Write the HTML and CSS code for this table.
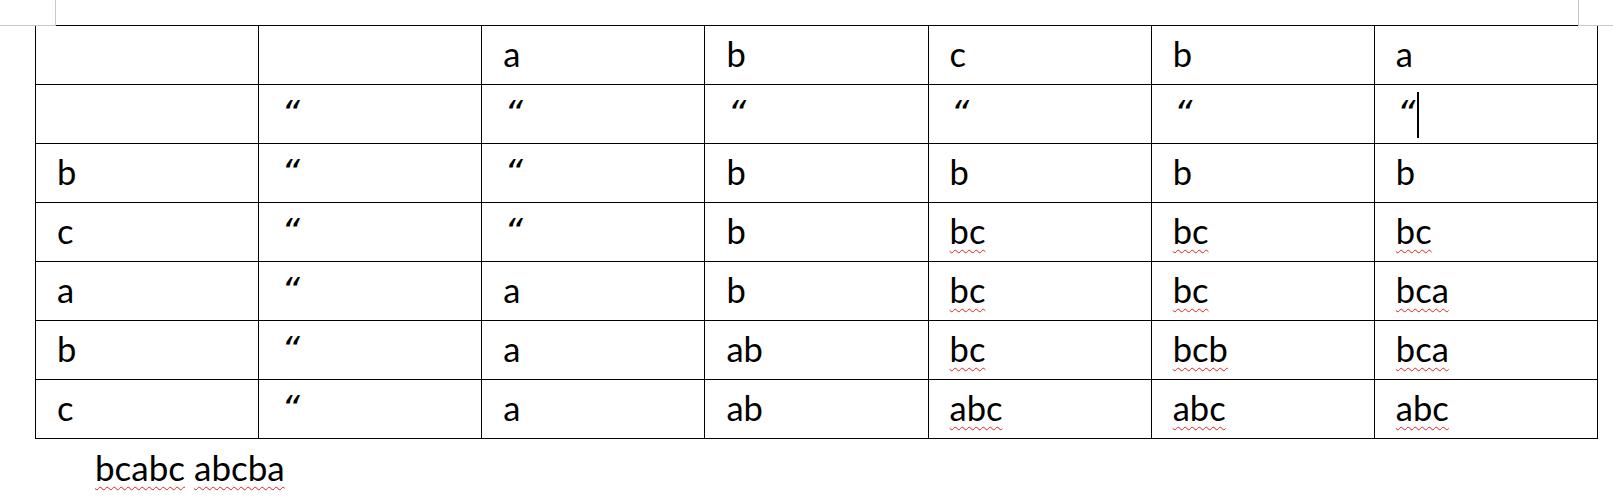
FILE: index.html
```html
<!DOCTYPE html>
<html>
<head>
<meta charset="utf-8">
<link rel="stylesheet" href="styles.css">
</head>
<body>
<div class="page">
  <div class="marks">
    <div class="mark mark-left"></div>
    <div class="mark mark-right"></div>
  </div>
  <table class="grid">
    <tr><td></td><td></td><td>a</td><td>b</td><td>c</td><td>b</td><td>a</td></tr>
    <tr><td></td><td><span class="q">“</span></td><td><span class="q">“</span></td><td><span class="q">“</span></td><td><span class="q">“</span></td><td><span class="q">“</span></td><td><span class="q">“</span><span class="caret"></span></td></tr>
    <tr><td>b</td><td><span class="q">“</span></td><td><span class="q">“</span></td><td>b</td><td>b</td><td>b</td><td>b</td></tr>
    <tr><td>c</td><td><span class="q">“</span></td><td><span class="q">“</span></td><td>b</td><td><span class="sp">bc</span></td><td><span class="sp">bc</span></td><td><span class="sp">bc</span></td></tr>
    <tr><td>a</td><td><span class="q">“</span></td><td>a</td><td>b</td><td><span class="sp">bc</span></td><td><span class="sp">bc</span></td><td><span class="sp">bca</span></td></tr>
    <tr><td>b</td><td><span class="q">“</span></td><td>a</td><td>ab</td><td><span class="sp">bc</span></td><td><span class="sp">bcb</span></td><td><span class="sp">bca</span></td></tr>
    <tr><td>c</td><td><span class="q">“</span></td><td>a</td><td>ab</td><td><span class="sp">abc</span></td><td><span class="sp">abc</span></td><td><span class="sp">abc</span></td></tr>
  </table>
  <p class="note"><span class="sp">bcabc</span> <span class="sp">abcba</span></p>
</div>
</body>
</html>
```

FILE: styles.css
```css
* { box-sizing: border-box; }
html, body { margin: 0; padding: 0; background: #fff; }
body {
  font-family: Lato, "Open Sans", sans-serif;
  font-size: 34.5px;
  color: #000;
}
.page { width: 1613px; height: 497px; overflow: hidden; }
.marks {
  display: flex;
  justify-content: space-between;
  height: 26px;
}
.mark { height: 26px; border-bottom: 1px solid #c8c8c8; }
.mark-left { width: 56px; border-right: 1px solid #c8c8c8; }
.mark-right { width: 35px; border-left: 1px solid #c8c8c8; }
.grid {
  border-collapse: collapse;
  margin: -1px 0 0 35px;
  table-layout: fixed;
  width: 1563px;
}
.grid td {
  border: 1px solid #000;
  width: 223px;
  height: 59px;
  padding: 7px 0 0 21px;
  vertical-align: top;
  line-height: 41px;
  white-space: nowrap;
}
.q {
  font-family: "DejaVu Sans", sans-serif;
  font-style: italic;
  font-size: 36px;
  letter-spacing: 0;
  margin-left: 1px;
}
.caret {
  display: inline-block;
  width: 2px;
  height: 46px;
  background: #000;
  vertical-align: top;
  margin-left: 1px;
}
.sp {
  text-decoration: underline wavy #e02020;
  text-decoration-thickness: 1px;
  text-underline-offset: 5px;
}
.note {
  margin: 8px 0 0 95px;
  line-height: 41px;
  font-size: 35px;
}
```
